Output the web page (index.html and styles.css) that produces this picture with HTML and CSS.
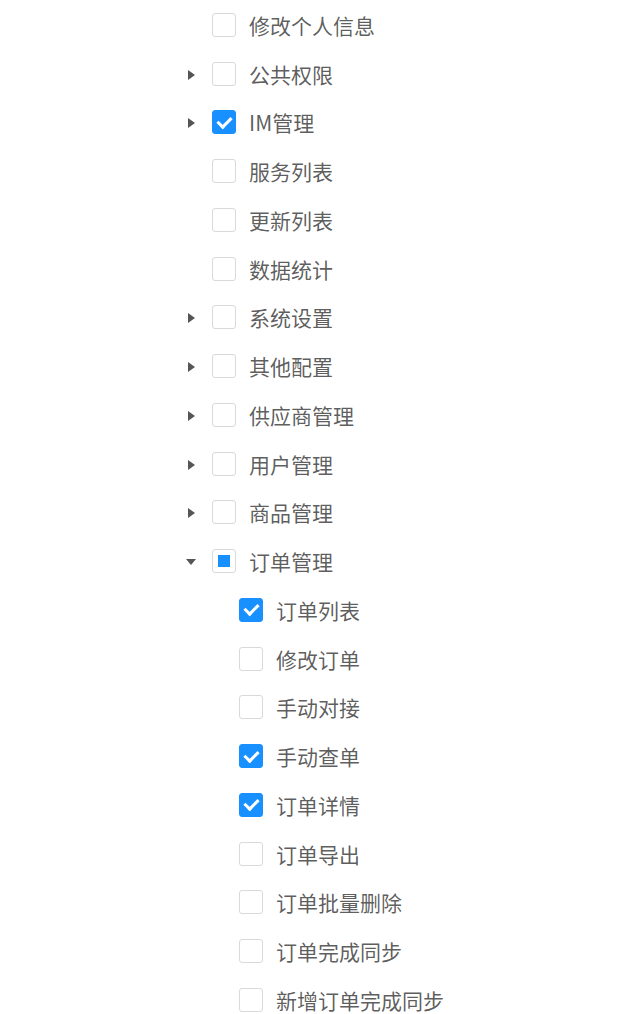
FILE: index.html
```html
<!DOCTYPE html>
<html lang="zh">
<head>
<meta charset="utf-8">
<link rel="stylesheet" href="styles.css">
</head>
<body>
<ul class="tree">
  <li class="node"><span class="switcher"></span><span class="cb"></span><span class="title">修改个人信息</span></li>
  <li class="node"><span class="switcher closed"></span><span class="cb"></span><span class="title">公共权限</span></li>
  <li class="node"><span class="switcher closed"></span><span class="cb checked"></span><span class="title">IM管理</span></li>
  <li class="node"><span class="switcher"></span><span class="cb"></span><span class="title">服务列表</span></li>
  <li class="node"><span class="switcher"></span><span class="cb"></span><span class="title">更新列表</span></li>
  <li class="node"><span class="switcher"></span><span class="cb"></span><span class="title">数据统计</span></li>
  <li class="node"><span class="switcher closed"></span><span class="cb"></span><span class="title">系统设置</span></li>
  <li class="node"><span class="switcher closed"></span><span class="cb"></span><span class="title">其他配置</span></li>
  <li class="node"><span class="switcher closed"></span><span class="cb"></span><span class="title">供应商管理</span></li>
  <li class="node"><span class="switcher closed"></span><span class="cb"></span><span class="title">用户管理</span></li>
  <li class="node"><span class="switcher closed"></span><span class="cb"></span><span class="title">商品管理</span></li>
  <li class="node"><span class="switcher open"></span><span class="cb indeterminate"></span><span class="title">订单管理</span></li>
  <li class="node child"><span class="switcher"></span><span class="cb checked"></span><span class="title">订单列表</span></li>
  <li class="node child"><span class="switcher"></span><span class="cb"></span><span class="title">修改订单</span></li>
  <li class="node child"><span class="switcher"></span><span class="cb"></span><span class="title">手动对接</span></li>
  <li class="node child"><span class="switcher"></span><span class="cb checked"></span><span class="title">手动查单</span></li>
  <li class="node child"><span class="switcher"></span><span class="cb checked"></span><span class="title">订单详情</span></li>
  <li class="node child"><span class="switcher"></span><span class="cb"></span><span class="title">订单导出</span></li>
  <li class="node child"><span class="switcher"></span><span class="cb"></span><span class="title">订单批量删除</span></li>
  <li class="node child"><span class="switcher"></span><span class="cb"></span><span class="title">订单完成同步</span></li>
  <li class="node child"><span class="switcher"></span><span class="cb"></span><span class="title">新增订单完成同步</span></li>
</ul>
</body>
</html>
```
FILE: styles.css
```css
html, body {
  margin: 0;
  padding: 0;
  background: #fff;
}
body {
  font-family: "Noto Sans CJK SC", "Noto Sans", sans-serif;
  color: rgba(0, 0, 0, 0.65);
  font-size: 21px;
}
.tree {
  list-style: none;
  margin: 0;
  padding: 0.6px 0 0 173px;
}
.node {
  display: flex;
  align-items: center;
  height: 48.75px;
}
.node.child {
  padding-left: 27px;
}
.switcher {
  width: 36px;
  height: 36px;
  flex: none;
  position: relative;
}
.switcher.closed::after {
  content: "";
  position: absolute;
  left: 14.5px;
  top: 14px;
  border-style: solid;
  border-width: 5px 0 5px 7px;
  border-color: transparent transparent transparent #555;
}
.switcher.open::after {
  content: "";
  position: absolute;
  left: 13px;
  top: 16px;
  border-style: solid;
  border-width: 6px 5px 0 5px;
  border-color: #555 transparent transparent transparent;
}
.cb {
  flex: none;
  box-sizing: border-box;
  width: 24px;
  height: 24px;
  margin-left: 3px;
  border: 1.5px solid #d9d9d9;
  border-radius: 3px;
  background: #fff;
  position: relative;
}
.cb.checked {
  background: #1890ff;
  border-color: #1890ff;
}
.cb.checked::after {
  content: "";
  position: absolute;
  left: 6.5px;
  top: 2.5px;
  width: 6px;
  height: 11px;
  border: solid #fff;
  border-width: 0 3px 3px 0;
  transform: rotate(45deg);
}
.cb.indeterminate::after {
  content: "";
  position: absolute;
  left: 4.5px;
  top: 4.5px;
  width: 12px;
  height: 12px;
  background: #1890ff;
}
.title {
  padding-left: 13px;
  line-height: 36px;
  white-space: nowrap;
}
```
